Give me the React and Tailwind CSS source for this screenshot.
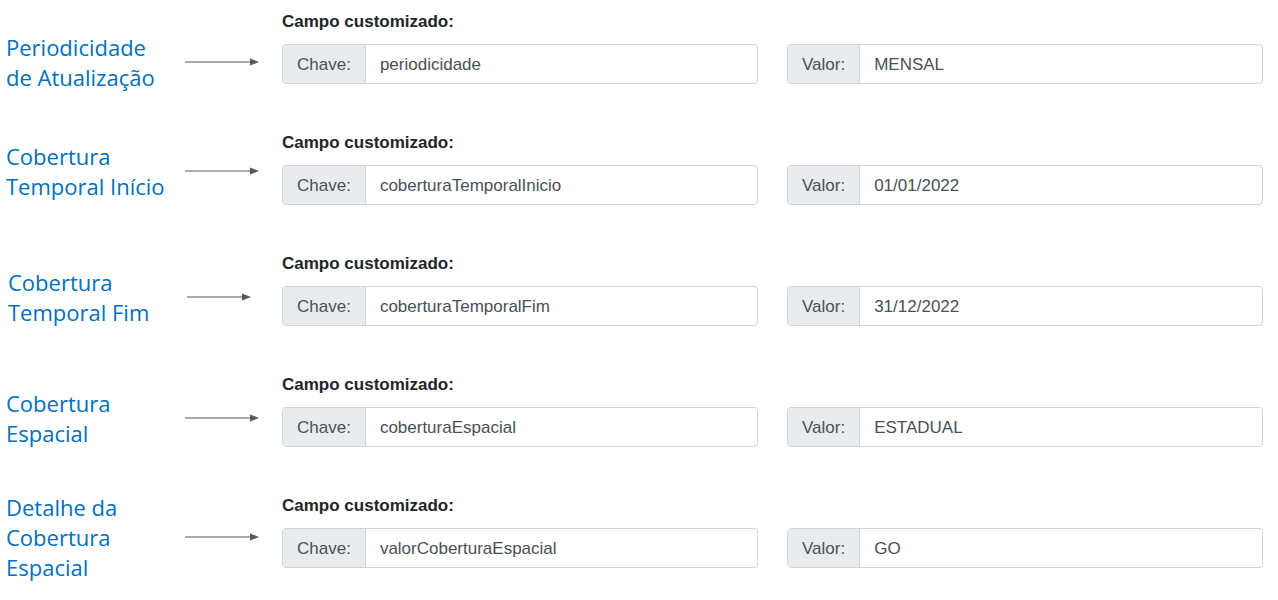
const rows = [
  { label: ['Periodicidade', 'de Atualização'], chave: 'periodicidade', valor: 'MENSAL', mt: 'mt-[32px]', pl: 'pl-[6px]', arrow: 'long' },
  { label: ['Cobertura', 'Temporal Início'], chave: 'coberturaTemporalInicio', valor: '01/01/2022', mt: 'mt-[20px]', pl: 'pl-[6px]', arrow: 'long' },
  { label: ['Cobertura', 'Temporal Fim'], chave: 'coberturaTemporalFim', valor: '31/12/2022', mt: 'mt-[25px]', pl: 'pl-[8px]', arrow: 'short' },
  { label: ['Cobertura', 'Espacial'], chave: 'coberturaEspacial', valor: 'ESTADUAL', mt: 'mt-[25px]', pl: 'pl-[6px]', arrow: 'long' },
  { label: ['Detalhe da', 'Cobertura', 'Espacial'], chave: 'valorCoberturaEspacial', valor: 'GO', mt: 'mt-[8px]', pl: 'pl-[6px]', arrow: 'long' },
];

function Arrow({ short }) {
  // thin grey line with a filled head
  const w = short ? 64 : 74;
  return (
    <svg width={w} height="10" viewBox={`0 0 ${w} 10`} className={short ? 'ml-[2px] shrink-0' : 'shrink-0'}>
      <line x1="0" y1="5" x2={w - 8} y2="5" stroke="#595959" strokeWidth="1.2" />
      <polygon points={`${w - 9},1.5 ${w},5 ${w - 9},8.5`} fill="#595959" />
    </svg>
  );
}

function InputGroup({ addon, value }) {
  return (
    <div className="flex h-[40px] flex-1 overflow-hidden rounded-[4px] border border-[#ced4da] bg-white">
      <div className="flex items-center border-r border-[#ced4da] bg-[#e9ecef] px-[14px] pt-[1px] text-[17px] text-[#495057]">
        {addon}
      </div>
      <div className="flex items-center px-[14px] pt-[1px] text-[17px] text-[#495057]">{value}</div>
    </div>
  );
}

export default function App() {
  return (
    <div className="h-[600px] w-[1278px] overflow-hidden bg-white">
      {rows.map((row, i) => (
        <div key={i} className="flex h-[121px]">
          {/* Left: blue annotation + arrow */}
          <div className={`flex w-[282px] shrink-0 items-center self-start ${row.mt}`}>
            <div
              className={`w-[185px] shrink-0 ${row.pl} text-[22px] leading-[30px] text-[#0070c0]`}
              style={{ fontFamily: '"Open Sans", sans-serif' }}
            >
              {row.label.map((l) => (
                <div key={l}>{l}</div>
              ))}
            </div>
            <Arrow short={row.arrow === 'short'} />
          </div>

          {/* Right: custom field form */}
          <div className="flex-1 pr-[15px] pt-[11px] font-['Liberation_Sans',Arial,sans-serif]">
            <div className="mb-[12px] text-[17px] font-bold leading-[21px] text-[#212529]">Campo customizado:</div>
            <div className="flex gap-[29px]">
              <InputGroup addon="Chave:" value={row.chave} />
              <InputGroup addon="Valor:" value={row.valor} />
            </div>
          </div>
        </div>
      ))}
    </div>
  );
}
